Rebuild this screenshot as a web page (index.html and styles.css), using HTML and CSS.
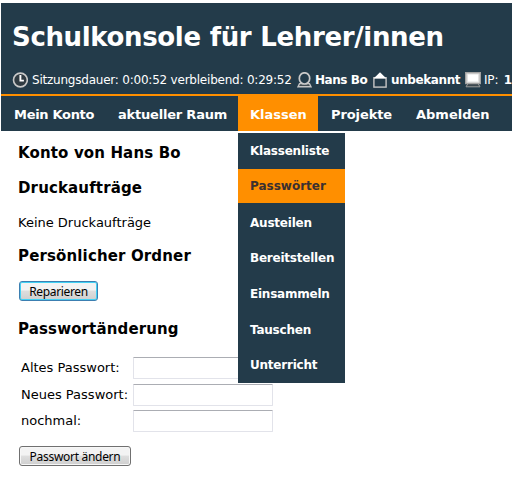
FILE: index.html
```html
<!DOCTYPE html>
<html lang="de">
<head>
<meta charset="utf-8">
<title>Schulkonsole</title>
<link rel="stylesheet" href="styles.css">
</head>
<body>
<header class="header">
  <h1 class="title"><span>Schulkonsole</span><span>für</span><span>Lehrer/innen</span></h1>
  <div class="status">
    <svg class="icon clock" width="16" height="16" viewBox="0 0 16 16"><circle cx="8.4" cy="8" r="6.9" fill="#303b42" stroke="#c9c9c9" stroke-width="1.6"/><path d="M8.4 3v5.6h3.5" fill="none" stroke="#fff" stroke-width="1.9"/></svg>
    <span class="session">Sitzungsdauer: 0:00:52 verbleibend: 0:29:52</span>
    <svg class="icon person" width="15" height="16" viewBox="0 0 15 16"><path d="M1 14.8l1.5-3.2h10l1.5 3.2z" fill="#424c52" stroke="#c4c4c4" stroke-width="1.4"/><ellipse cx="7.5" cy="6.4" rx="5.2" ry="5.6" fill="#233b4a" stroke="#c9c9c9" stroke-width="1.7"/></svg>
    <b class="user">Hans Bo</b>
    <svg class="icon house" width="14" height="16" viewBox="0 0 14 16"><rect x=".9" y="5.7" width="12.2" height="9.4" fill="#233b4a" stroke="#c6c6c6" stroke-width="1.4"/><path d="M.6 6.4L7 .2l6.4 6.2z" fill="#fff"/></svg>
    <b class="room">unbekannt</b>
    <svg class="icon screen" width="16" height="16" viewBox="0 0 16 16"><path d="M3 11.5L1 14.8h14l-2-3.3" fill="#3c474e" stroke="#9a9a9a"/><rect x=".7" y=".7" width="14.6" height="10.8" fill="#e2e2e2" stroke="#a2a2a2" stroke-width="1.4"/><path d="M3 2.5h10v7H3z" fill="#fff"/></svg>
    <span class="ip">IP: <b>1</b></span>
  </div>
</header>
<nav class="nav">
  <a class="konto">Mein Konto</a>
  <a class="raum">aktueller Raum</a>
  <div class="active"><a>Klassen</a>
    <ul class="menu">
      <li>Klassenliste</li>
      <li class="selected">Passwörter</li>
      <li>Austeilen</li>
      <li>Bereitstellen</li>
      <li>Einsammeln</li>
      <li>Tauschen</li>
      <li>Unterricht</li>
    </ul>
  </div>
  <a class="projekte">Projekte</a>
  <a class="abmelden">Abmelden</a>
</nav>
<main class="content">
  <h2>Konto von Hans Bo</h2>
  <h2>Druckaufträge</h2>
  <p class="jobs">Keine Druckaufträge</p>
  <h2 class="folder">Persönlicher Ordner</h2>
  <button class="repair">Reparieren</button>
  <h2 class="password">Passwortänderung</h2>
  <form class="form">
    <label for="old">Altes Passwort:</label><input id="old" type="password">
    <label for="new">Neues Passwort:</label><input id="new" type="password">
    <label for="again">nochmal:</label><input id="again" type="password">
  </form>
  <button class="change">Passwort ändern</button>
</main>
</body>
</html>
```
FILE: styles.css
```css
* { box-sizing: border-box; }
html, body { height: 100%; overflow: hidden; }
body {
  margin: 0;
  padding: 3px 0 0 1px;
  background: #fff;
  color: #000;
  font: 13px/16px "DejaVu Sans", Verdana, sans-serif;
  white-space: nowrap;
}
.header {
  height: 93px;
  padding: 17px 0 0 11px;
  background: #233b4a;
  border-bottom: 2px solid #ff8f00;
  color: #fff;
  overflow: hidden;
}
.title { display: flex; gap: 9px; margin: 0; font-size: 26px; line-height: 34px; letter-spacing: -.35px; }
.status { display: flex; align-items: center; margin-top: 17px; height: 18px; font-size: 12px; }
.status > * { flex: none; }
.clock { margin-right: 4px; }
.session { width: 265px; letter-spacing: -.22px; }
.person { margin-right: 3px; }
.user { width: 58px; letter-spacing: -.45px; }
.house { margin-right: 4px; }
.room { width: 74px; letter-spacing: -.4px; }
.screen { margin-right: 3px; }
.ip { letter-spacing: -.2px; }
.ip b { margin-left: 2px; }
.nav {
  display: flex;
  height: 35px;
  background: #233b4a;
  color: #fff;
  font-weight: bold;
  line-height: 37px;
}
.nav > a { padding-left: 13px; }
.konto { width: 104px; letter-spacing: -.3px; }
.raum { width: 133px; letter-spacing: -.2px; }
.projekte { width: 85px; letter-spacing: -.1px; }
.active { position: relative; width: 80px; padding-left: 12px; background: #ff8f00; }
.menu {
  position: absolute;
  left: 0;
  top: 37px;
  width: 107px;
  height: 250px;
  margin: 0;
  padding: 0;
  list-style: none;
  background: #233b4a;
  font-size: 12px;
  letter-spacing: -.22px;
}
.menu li { height: 35.7px; padding-left: 12px; line-height: 36px; }
.menu .selected { height: 34px; margin: .3px 0 1.7px; background: #ff8f00; color: #3b3030; line-height: 35px; letter-spacing: 0; }
.content { padding: 13px 0 0 17px; }
h2 { margin: 0 0 17px; font-size: 15px; line-height: 18px; letter-spacing: .14px; }
.jobs { margin: 0 0 15px; line-height: 18px; }
.folder { margin-bottom: 16px; }
button {
  display: block;
  height: 20px;
  margin: 0 0 0 1px;
  padding: 0;
  border: 1px solid #707070;
  border-radius: 3px;
  background: linear-gradient(#f3f3f3 0 45%, #dedede 50%, #cfcfcf);
  box-shadow: inset 0 0 0 1px #f7f7f7;
  color: #000;
  font: 12px/17px "Noto Sans", Tahoma, sans-serif;
  letter-spacing: -.35px;
}
.repair { width: 79px; border-color: #3c7fb1; box-shadow: inset 0 0 0 1px #43d2f5; }
.change { width: 112px; margin-top: 14px; letter-spacing: -.3px; }
.password { margin: 19px 0 18px; }
.form {
  display: grid;
  grid-template-columns: 112px 140px;
  grid-template-rows: 22px 22px 22px;
  row-gap: 4.5px;
  align-items: center;
  margin: 0 0 0 3px;
}
.password + .form { margin-top: 19px; }
input { width: 140px; height: 22px; margin: 0; border: 1px solid #e2e3ea; border-top-color: #abadb3; border-radius: 1px; background: #fff; }
```
